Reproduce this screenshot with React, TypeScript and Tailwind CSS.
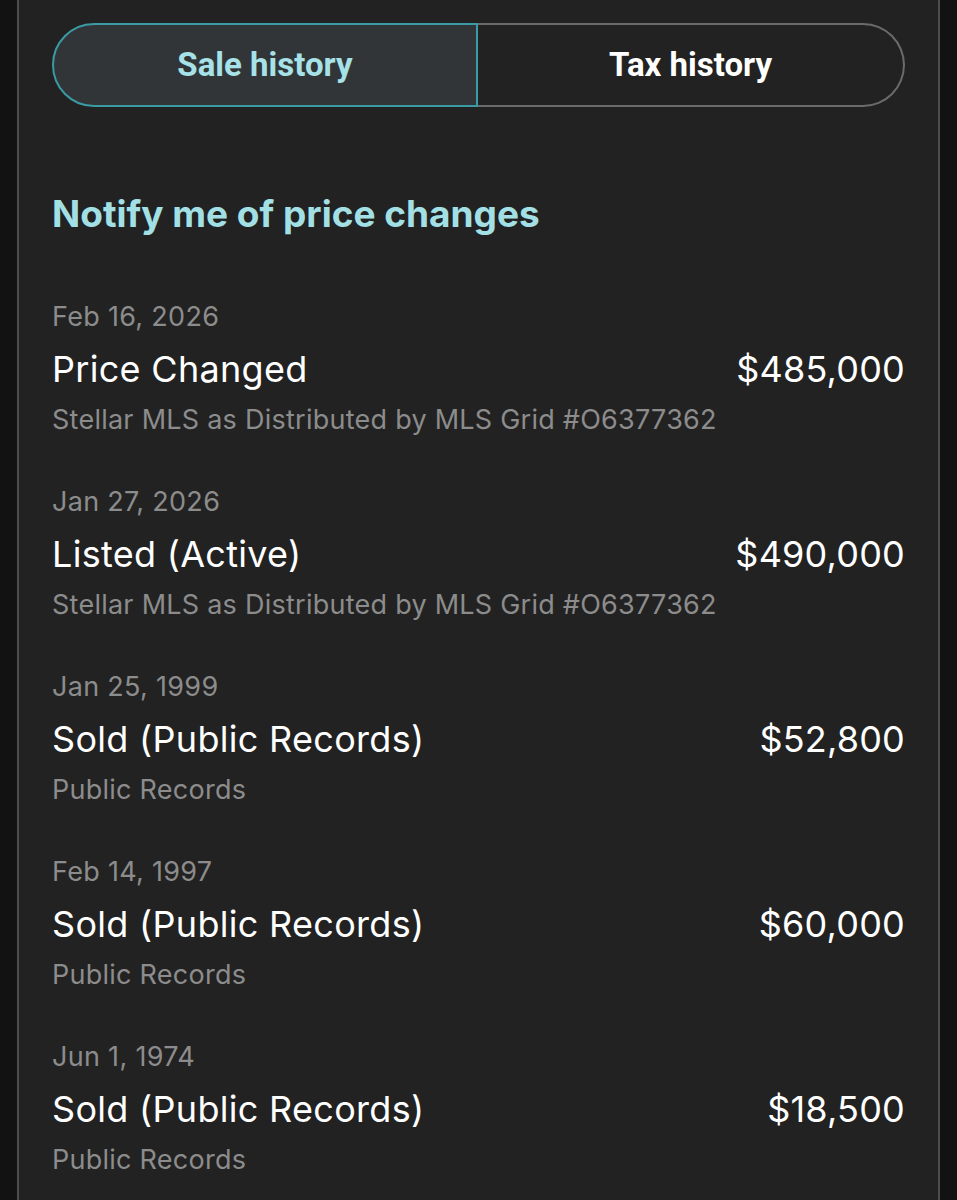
import React from 'react'

type Event = {
  date: string
  title: string
  source: string
  price: string
}

const events: Event[] = [
  { date: 'Feb 16, 2026', title: 'Price Changed', source: 'Stellar MLS as Distributed by MLS Grid #O6377362', price: '$485,000' },
  { date: 'Jan 27, 2026', title: 'Listed (Active)', source: 'Stellar MLS as Distributed by MLS Grid #O6377362', price: '$490,000' },
  { date: 'Jan 25, 1999', title: 'Sold (Public Records)', source: 'Public Records', price: '$52,800' },
  { date: 'Feb 14, 1997', title: 'Sold (Public Records)', source: 'Public Records', price: '$60,000' },
  { date: 'Jun 1, 1974', title: 'Sold (Public Records)', source: 'Public Records', price: '$18,500' },
]

function EventRow({ event }: { event: Event }) {
  return (
    <div className="flex flex-col">
      <p className="text-[27px] leading-[40px] tracking-[0.3px] text-[#8c8c8c]">{event.date}</p>
      <div className="flex items-center justify-between">
        <p className="text-[36px] leading-[64px] tracking-[0.3px] text-white">{event.title}</p>
        <p className="text-[36px] leading-[64px] tracking-[0.2px] text-white">{event.price}</p>
      </div>
      <p className="text-[27px] leading-[38px] tracking-[0.25px] text-[#8c8c8c]">{event.source}</p>
    </div>
  )
}

export default function App() {
  return (
    <div className="w-[957px] h-[1200px] overflow-hidden bg-[#121212] flex font-['Inter','Noto_Sans',sans-serif]">
      <div className="ml-[17px] w-[923px] h-full bg-[#222222] border-x-2 border-[#4d4d4d] px-[33px] pt-[23px]">
        <div className="flex h-[84px]">
          <button className="w-[426px] h-full rounded-l-full border-2 border-[#3a9ba4] bg-[#323537] font-['Roboto',sans-serif] font-bold text-[33px] text-[#a6e2e7]">
            Sale history
          </button>
          <button className="flex-1 h-full rounded-r-full border-2 border-l-0 border-[#6b6b6b] font-['Roboto',sans-serif] font-bold text-[33px] text-white">
            Tax history
          </button>
        </div>

        <h2 className="mt-[83px] text-[37px] leading-[48px] font-bold text-[#a3e0e6]">
          Notify me of price changes
        </h2>

        <div className="mt-[59px] flex flex-col gap-[43px]">
          {events.map((e, i) => (
            <EventRow key={i} event={e} />
          ))}
        </div>
      </div>
    </div>
  )
}
